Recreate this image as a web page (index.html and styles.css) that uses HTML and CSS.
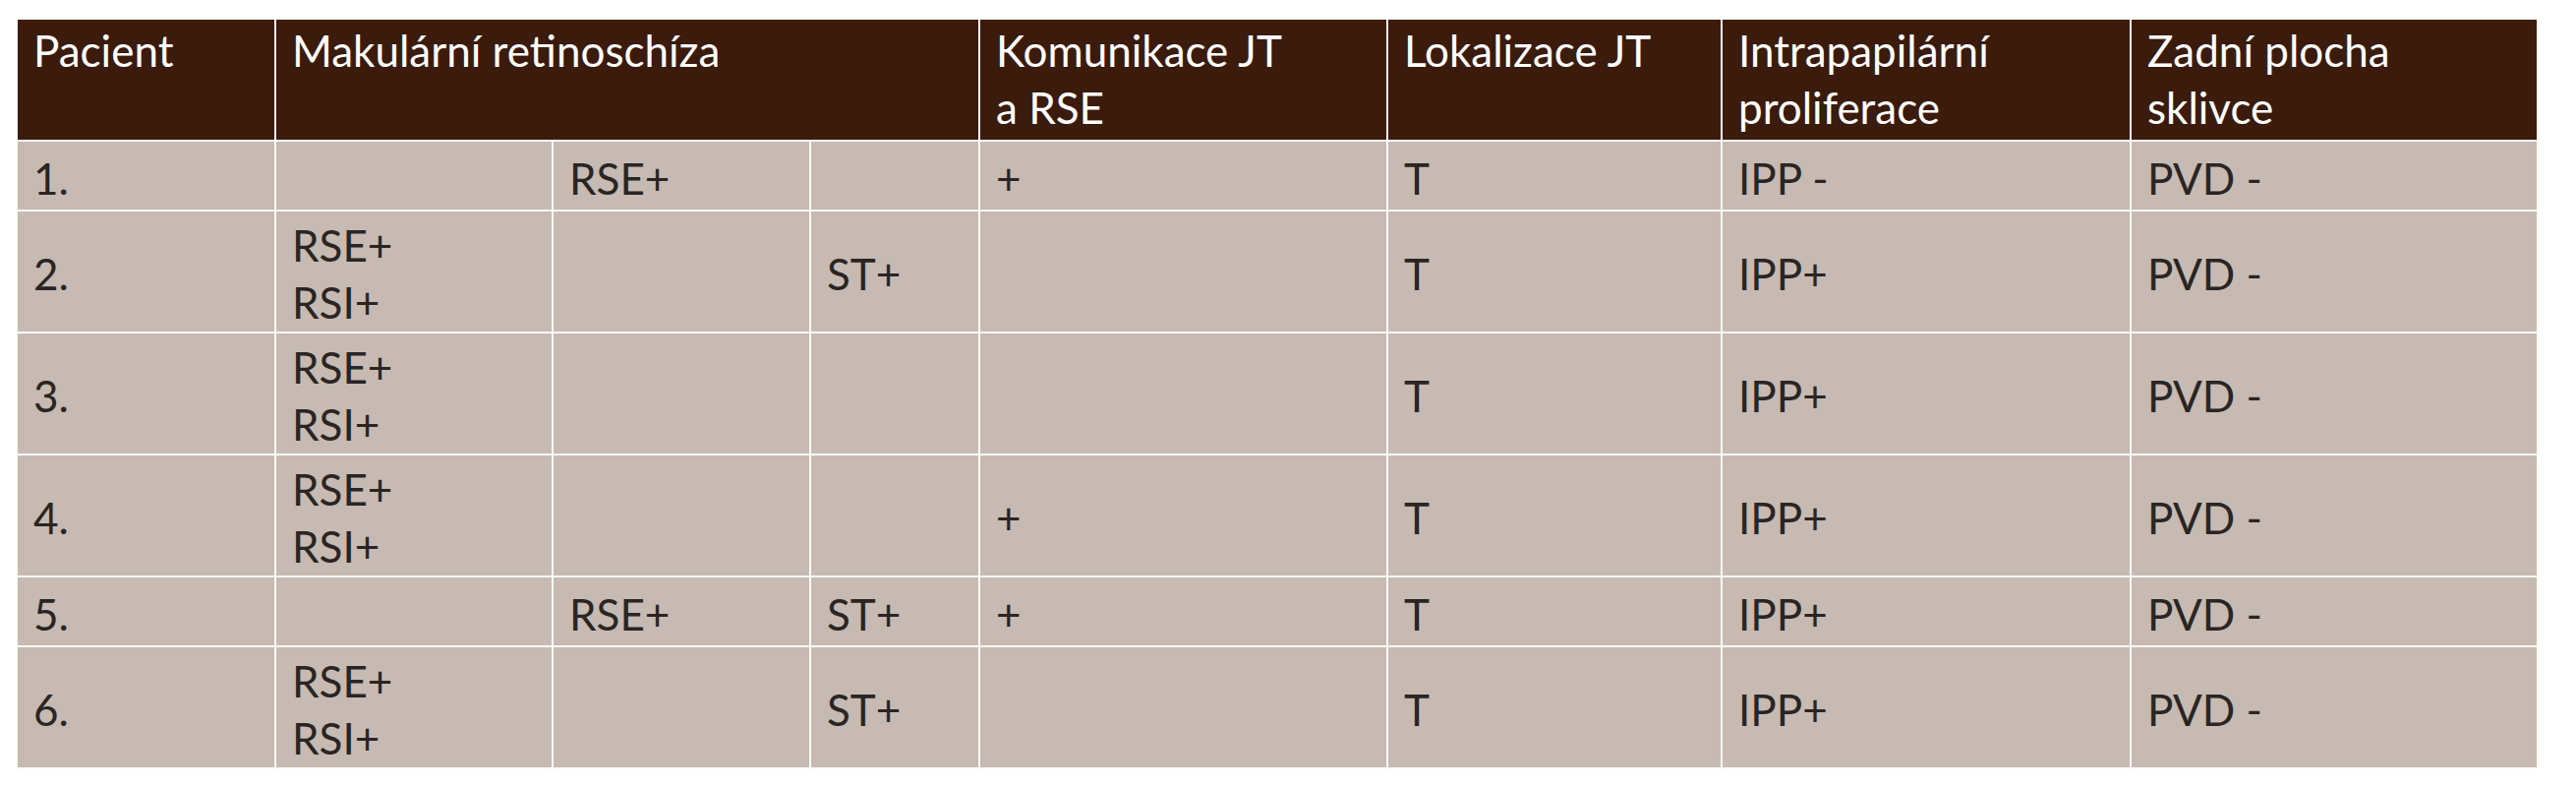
FILE: index.html
```html
<!DOCTYPE html>
<html lang="cs">
<head>
<meta charset="utf-8">
<title>Tabulka pacientů</title>
<link rel="stylesheet" href="styles.css">
</head>
<body>
<table class="data">
  <colgroup>
    <col class="c-pac">
    <col class="c-mak1">
    <col class="c-mak2">
    <col class="c-mak3">
    <col class="c-kom">
    <col class="c-lok">
    <col class="c-ipp">
    <col class="c-pvd">
  </colgroup>
  <thead>
    <tr class="head">
      <th>Pacient</th>
      <th colspan="3">Makulární retinoschíza</th>
      <th>Komunikace JT<br>a RSE</th>
      <th>Lokalizace JT</th>
      <th>Intrapapilární<br>proliferace</th>
      <th>Zadní plocha<br>sklivce</th>
    </tr>
  </thead>
  <tbody>
    <tr class="single">
      <td>1.</td><td></td><td>RSE+</td><td></td><td>+</td><td>T</td><td>IPP -</td><td>PVD -</td>
    </tr>
    <tr class="double">
      <td>2.</td><td>RSE+<br>RSI+</td><td></td><td>ST+</td><td></td><td>T</td><td>IPP+</td><td>PVD -</td>
    </tr>
    <tr class="double">
      <td>3.</td><td>RSE+<br>RSI+</td><td></td><td></td><td></td><td>T</td><td>IPP+</td><td>PVD -</td>
    </tr>
    <tr class="double">
      <td>4.</td><td>RSE+<br>RSI+</td><td></td><td></td><td>+</td><td>T</td><td>IPP+</td><td>PVD -</td>
    </tr>
    <tr class="single">
      <td>5.</td><td></td><td>RSE+</td><td>ST+</td><td>+</td><td>T</td><td>IPP+</td><td>PVD -</td>
    </tr>
    <tr class="double">
      <td>6.</td><td>RSE+<br>RSI+</td><td></td><td>ST+</td><td></td><td>T</td><td>IPP+</td><td>PVD -</td>
    </tr>
  </tbody>
</table>
</body>
</html>
```

FILE: styles.css
```css
html, body {
  margin: 0;
  padding: 0;
  background: #ffffff;
}

body {
  padding: 18px 0 0 16px;
  font-family: Lato, "Open Sans", "Liberation Sans", sans-serif;
}

.data {
  border-collapse: collapse;
  table-layout: fixed;
  width: 2566px;
  font-size: 44px;
  line-height: 58px;
}

.c-pac  { width: 263px; }
.c-mak1 { width: 282px; }
.c-mak2 { width: 262px; }
.c-mak3 { width: 172px; }
.c-kom  { width: 415px; }
.c-lok  { width: 340px; }
.c-ipp  { width: 416px; }
.c-pvd  { width: 414px; }

.data th,
.data td {
  border: 2px solid #fdfaf6;
  padding: 0 10px 0 16px;
  text-align: left;
  white-space: nowrap;
  overflow: hidden;
}

.data th {
  background: #3a1b0c;
  color: #ffffff;
  font-weight: 400;
  vertical-align: top;
  padding-top: 2px;
}

.data td {
  background: #c6bab2;
  color: #2a2523;
  vertical-align: middle;
  padding-top: 4px;
}

.head   { height: 124px; }
.single { height: 71px; }
.double { height: 124px; }
```
